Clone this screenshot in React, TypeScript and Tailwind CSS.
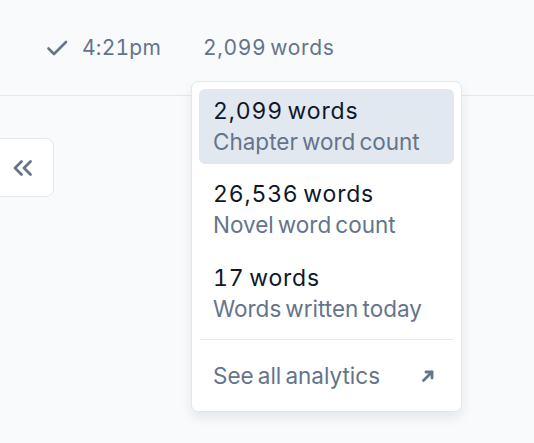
import React from "react";

const Check = () => (
  <svg width="24" height="24" viewBox="0 0 24 24" fill="none" stroke="#64748b" strokeWidth="2.6" strokeLinecap="round" strokeLinejoin="round">
    <path d="M3.5 12.5l5.5 5.5L21 6" />
  </svg>
);

const Chevrons = () => (
  <svg width="24" height="24" viewBox="0 0 24 24" fill="none" stroke="#64748b" strokeWidth="2.8" strokeLinecap="round" strokeLinejoin="round">
    <path d="M10.5 18.5L4 12l6.5-6.5" />
    <path d="M19.5 18.5L13 12l6.5-6.5" />
  </svg>
);

const Arrow = () => (
  <svg width="16" height="16" viewBox="0 0 16 16" fill="none" stroke="#64748b" strokeWidth="2.8" strokeLinecap="round" strokeLinejoin="round">
    <path d="M3.5 12.5L12 4" />
    <path d="M6 4h6v6" />
  </svg>
);

const items = [
  { t: "2,099 words", s: "Chapter word count", active: true },
  { t: "26,536 words", s: "Novel word count", active: false },
  { t: "17 words", s: "Words written today", active: false },
];

export default function App() {
  return (
    <div
      className="relative w-[534px] h-[443px] overflow-hidden bg-[#f8fafc] [word-spacing:-0.14em]"
      style={{ fontFamily: "Inter, 'Noto Sans', sans-serif" }}
    >
      <div className="h-[96px] border-b border-[#e2e8f0] flex items-center pl-[45px] text-[21px] text-[#64748b] tabular-nums tracking-[0.01em]">
        <Check />
        <span className="ml-[13px]">4:21pm</span>
        <span className="ml-[42px] tracking-[0.03em]">2,099 words</span>
      </div>
      <div className="pt-[42px]">
        <div className="ml-[-10px] w-[64px] h-[59px] rounded-[8px] border border-[#e2e8f0] bg-white flex items-center justify-end pr-[18px]">
          <Chevrons />
        </div>
      </div>
      <div className="absolute left-[191px] top-[81px] w-[271px] h-[331px] bg-white border border-[#e2e8f0] rounded-[7px] shadow-[0_6px_12px_rgba(15,23,42,0.08)] p-[7px] flex flex-col gap-[8px]">
        {items.map((it) => (
          <div
            key={it.t}
            className={`h-[76px] rounded-[6px] px-[14px] flex flex-col justify-center ${it.active ? "bg-[#e2e8f0]" : ""}`}
          >
            <div className="text-[23px] leading-[29px] text-[#0f172a] tabular-nums tracking-[0.035em]">{it.t}</div>
            <div className="text-[22.5px] leading-[31px] text-[#64748b]">{it.s}</div>
          </div>
        ))}
        <div className="h-px bg-[#e2e8f0] mx-[1px]" />
        <div className="h-[56px] px-[14px] flex items-center justify-between text-[22.5px] text-[#64748b]">
          <span>See all analytics</span>
          <span className="mr-[4px]"><Arrow /></span>
        </div>
      </div>
    </div>
  );
}
